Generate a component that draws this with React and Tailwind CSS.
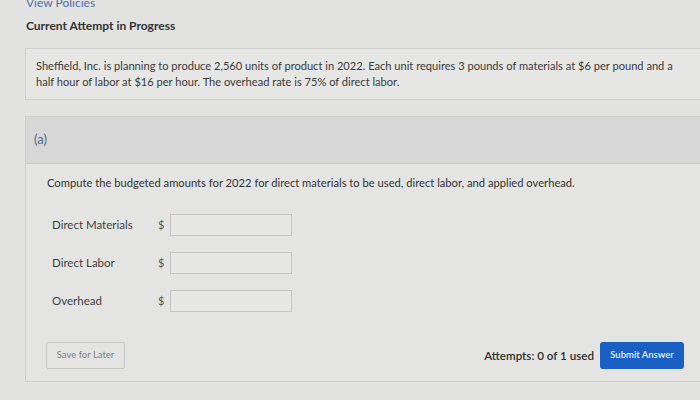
export default function App() {
  const rows = ["Direct Materials", "Direct Labor", "Overhead"];
  return (
    <div
      className="w-[700px] h-[400px] overflow-hidden bg-[#e2e2e0] text-[#3b3b3b]"
      style={{ fontFamily: "Lato, 'Open Sans', sans-serif" }}
    >
      <div className="pl-[26px]">
        <div className="-mt-[4px] h-[14px] text-[12px] leading-[14px] text-[#4d6fa8]">View Policies</div>
        <div className="mt-[8px] h-[16px] text-[12px] leading-[16px] font-bold text-[#333]">Current Attempt in Progress</div>
      </div>
      <div className="ml-[25px] mt-[14px] w-[700px] h-[52px] border border-[#cfcfcd] bg-[#e6e6e4] pl-[10px] pt-[9px] text-[11.1px] leading-[16px] text-[#3a3a3a] whitespace-nowrap">
        Sheffield, Inc. is planning to produce 2,560 units of product in 2022. Each unit requires 3 pounds of materials at $6 per pound and a
        <br />
        half hour of labor at $16 per hour. The overhead rate is 75% of direct labor.
      </div>
      <div className="ml-[25px] mt-[16px] w-[700px] h-[266px] border border-[#cdcdcb] bg-[#e4e4e2] flex flex-col">
        <div className="h-[47px] bg-[#d8d7d7] border-b border-[#c9c9c7] flex items-center pl-[8px] text-[13px] text-[#4e6a90]">(a)</div>
        <div className="pl-[21px] pt-[11px] text-[11.2px] leading-[16px] text-[#333] whitespace-nowrap">
          Compute the budgeted amounts for 2022 for direct materials to be used, direct labor, and applied overhead.
        </div>
        <div className="flex flex-col gap-[16px] mt-[23px] pl-[26px]">
          {rows.map((r) => (
            <div key={r} className="flex items-center h-[22px]">
              <div className="w-[106px] text-[11.5px] text-[#3f3f3f]">{r}</div>
              <div className="w-[12px] text-[11px] text-[#555]">$</div>
              <div className="w-[122px] h-[22px] border border-[#c4c4c2] bg-[#e7e7e5]"></div>
            </div>
          ))}
        </div>
        <div className="flex items-center mt-[30px] pl-[20px] pr-[17px] w-[675px]">
          <div className="w-[79px] h-[27px] border border-[#c6c6c4] rounded-[2px] flex items-center justify-center text-[9.5px] text-[#808080]">
            Save for Later
          </div>
          <div className="ml-auto flex items-center gap-[6px]">
            <span className="text-[11.6px] font-semibold text-[#2e2e2e]">Attempts: 0 of 1 used</span>
            <div className="w-[84px] h-[27px] rounded-[3px] bg-[#1a5fc4] flex items-center justify-center text-[9.5px] font-semibold text-[#e8efff]">
              Submit Answer
            </div>
          </div>
        </div>
      </div>
    </div>
  );
}
